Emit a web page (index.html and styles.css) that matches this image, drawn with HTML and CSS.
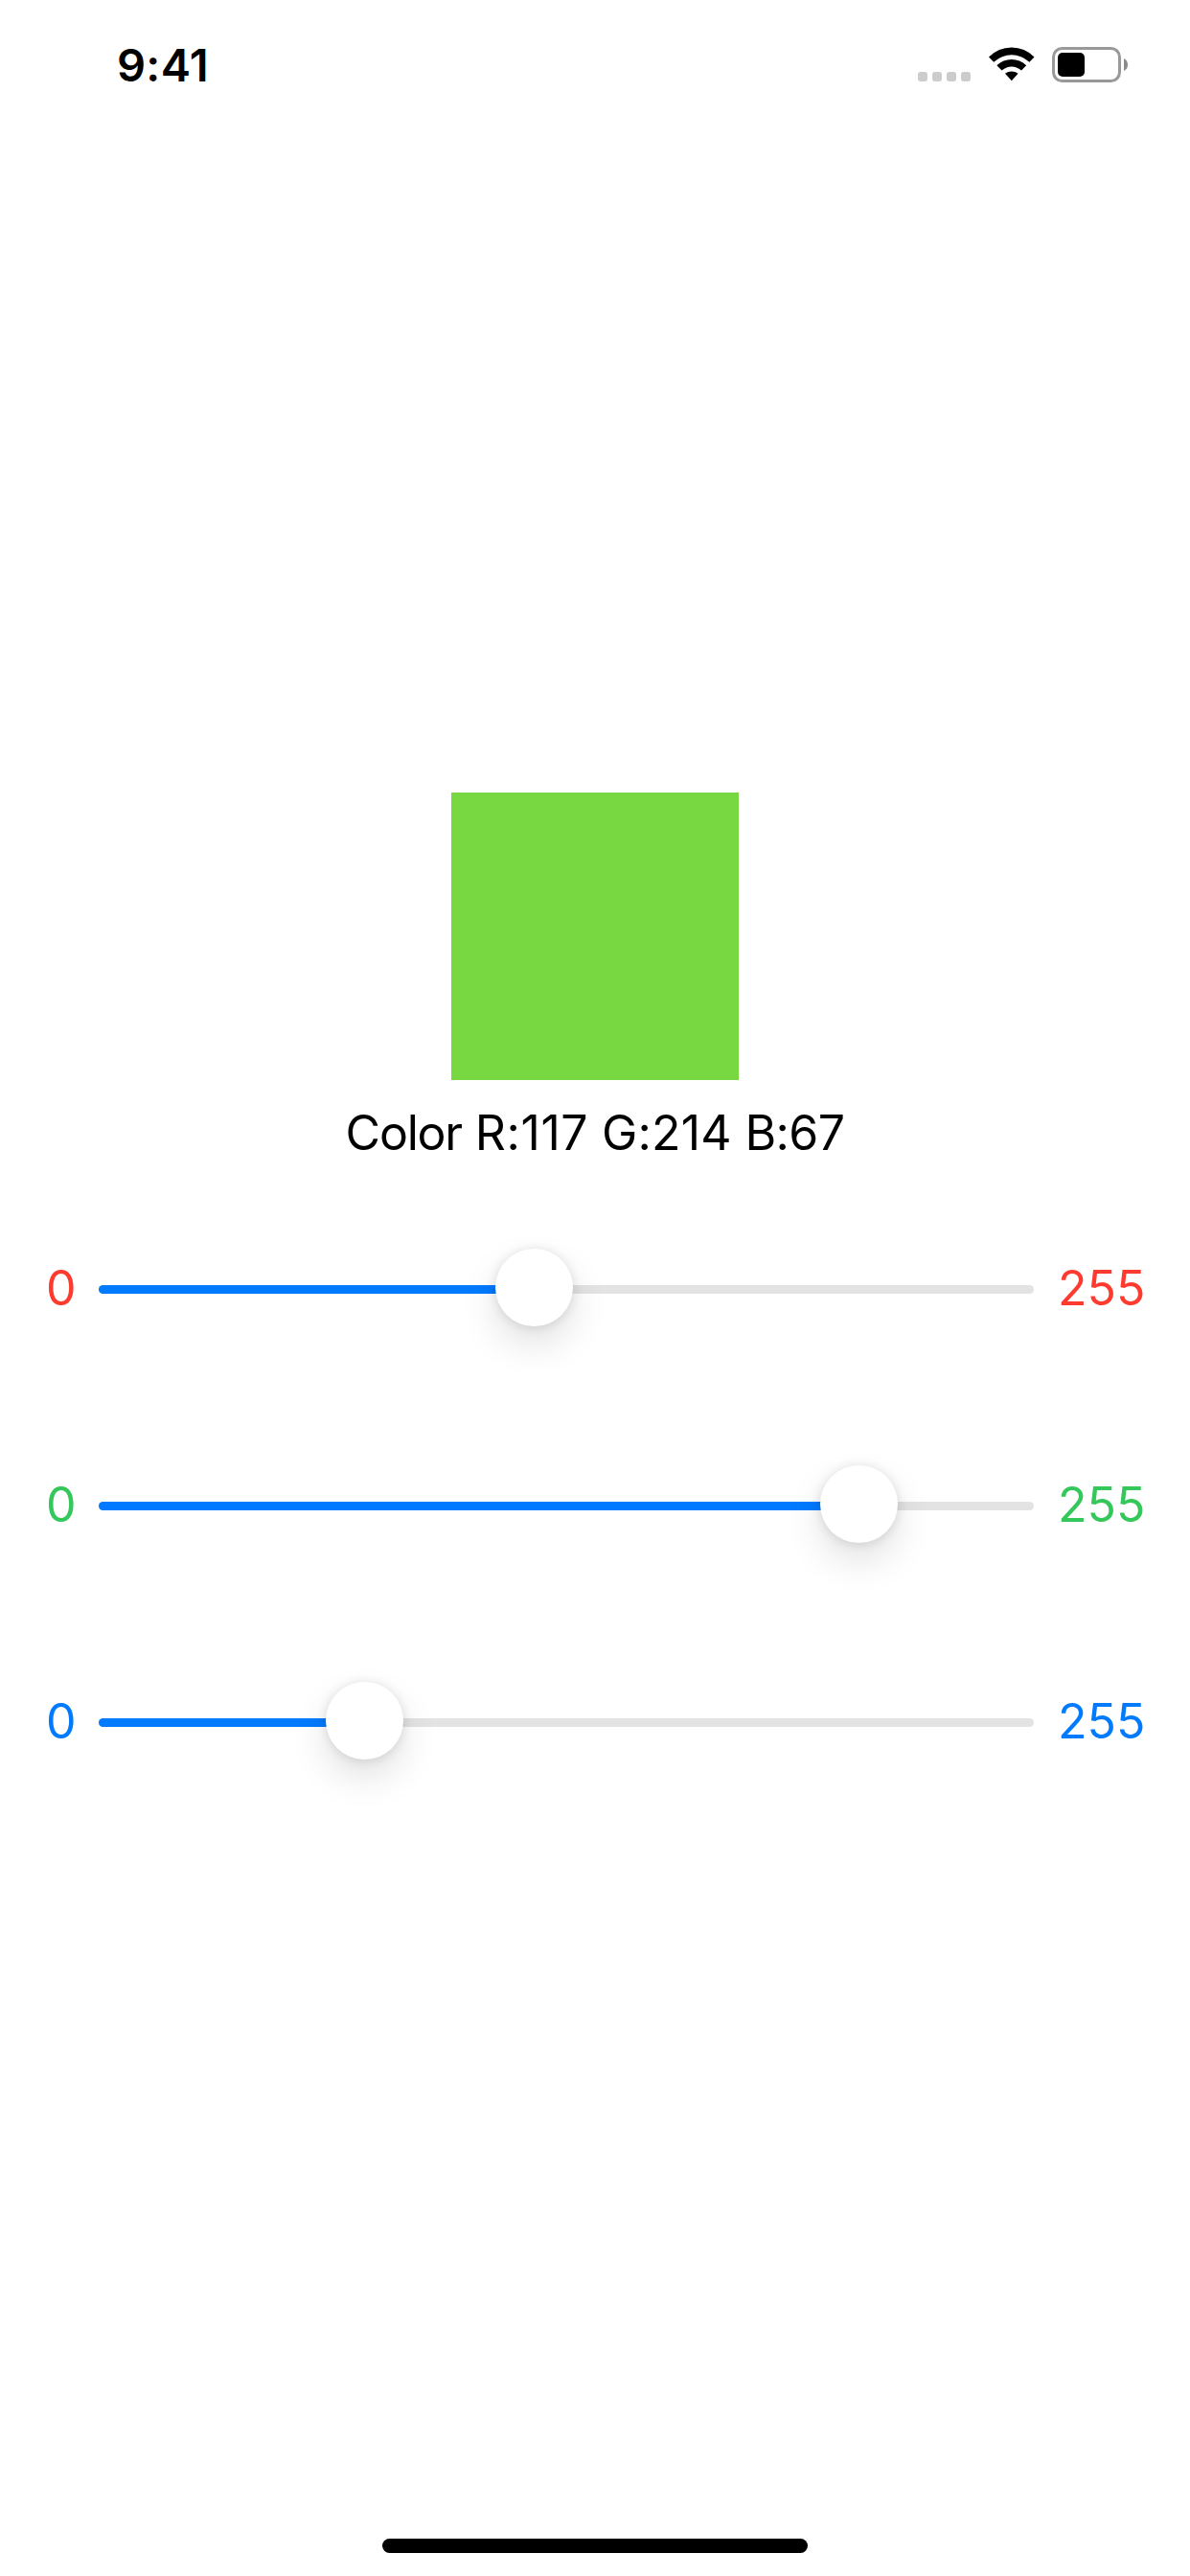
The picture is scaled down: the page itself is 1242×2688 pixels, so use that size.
FILE: index.html
```html
<!DOCTYPE html>
<html lang="en">
<head>
<meta charset="utf-8">
<title>Color mixer</title>
<link rel="stylesheet" href="styles.css">
</head>
<body>
<div class="screen">
  <header class="status">
    <span class="time">9:41</span>
    <div class="indicators">
      <div class="cellular"><i></i><i></i><i></i><i></i></div>
      <svg class="wifi" width="48" height="37" viewBox="0 0 48 37">
        <path d="M0 10.5Q10 .5 23.8 .5T47.5 10.5L42.4 15.8Q34 8.3 23.8 8.3T5.2 15.8Z"/>
        <path d="M8.4 19.2Q15 13 23.8 13T39.2 19.2L34 24.5Q29 20.6 23.8 20.6T13.6 24.5Z"/>
        <path d="M17 27.8Q20 25.4 23.8 25.4T30.6 27.8L23.8 35.3Z"/>
      </svg>
      <svg class="battery" width="80" height="38" viewBox="0 0 80 38">
        <rect x="1.5" y="1.5" width="69" height="34" rx="9" fill="none" stroke="#999" stroke-width="3"/>
        <rect x="6" y="6" width="28" height="25" rx="5"/>
        <path d="M75 12Q79 14 79 18.5T75 25Z" fill="#8b8b8b"/>
      </svg>
    </div>
  </header>
  <main class="mixer">
    <div class="swatch"></div>
    <p class="caption">Color <span class="r">R:117</span> <span class="g">G:214</span> <span class="b">B:67</span></p>
    <div class="sliders">
      <div class="row red"><span class="min">0</span><div class="track"><div class="fill" style="width:454px"></div><div class="thumb" style="left:414px"></div></div><span class="max">255</span></div>
      <div class="row green"><span class="min">0</span><div class="track"><div class="fill" style="width:793px"></div><div class="thumb" style="left:753px"></div></div><span class="max">255</span></div>
      <div class="row blue"><span class="min">0</span><div class="track"><div class="fill" style="width:277px"></div><div class="thumb" style="left:237px"></div></div><span class="max">255</span></div>
    </div>
  </main>
  <div class="home-bar"></div>
</div>
</body>
</html>
```
FILE: styles.css
```css
* { box-sizing: border-box; }
body { margin: 0; background: #fff; color: #000; font-family: Inter, "Liberation Sans", sans-serif; }
.screen { display: flex; flex-direction: column; align-items: center; width: 1242px; height: 2688px; padding-bottom: 24px; }
.status { display: flex; justify-content: space-between; width: 100%; height: 132px; padding: 38px 64px 0 122px; }
.time { font-size: 47px; font-weight: 600; line-height: 60px; letter-spacing: 0.3px; }
.indicators { display: flex; align-items: flex-start; padding-top: 11px; }
.cellular { display: flex; gap: 5px; margin: 26px 19px 0 0; }
.cellular i { width: 10px; height: 10px; border-radius: 3px; background: #ccc; }
.wifi { margin-right: 18px; }
.mixer { display: flex; flex: 1; flex-direction: column; align-items: center; width: 100%; padding-top: 695px; }
.swatch { width: 300px; height: 300px; background: #77d842; }
.caption { margin: 25px 0 0; font-size: 50px; line-height: 61px; letter-spacing: -1.2px; word-spacing: 0.8px; white-space: nowrap; }
.caption .r { letter-spacing: 0.6px; }
.caption .g { letter-spacing: 0.2px; }
.caption .b { letter-spacing: -0.6px; }
.sliders { display: flex; flex-direction: column; gap: 145px; width: 100%; margin-top: 90px; }
.row { display: flex; align-items: center; justify-content: space-between; height: 81px; padding: 0 48px; font-size: 50px; line-height: 61px; }
.min, .max { padding-top: 2px; }
.min { width: 55px; }
.max { width: 90px; }
.red { color: #ff3b30; }
.green { color: #34c759; }
.blue { color: #007aff; }
.track { position: relative; width: 976px; height: 9px; margin: 4px 25px 0 0; border-radius: 5px; background: #e3e3e4; }
.fill { height: 9px; border-radius: 5px 0 0 5px; background: #007aff; }
.thumb { position: absolute; top: -38px; width: 81px; height: 81px; border-radius: 50%; background: #fff; box-shadow: 0 1px 12px rgba(0,0,0,.12), 0 18px 39px rgba(0,0,0,.12); }
.home-bar { width: 444px; height: 15px; border-radius: 8px; background: #000; }
```
